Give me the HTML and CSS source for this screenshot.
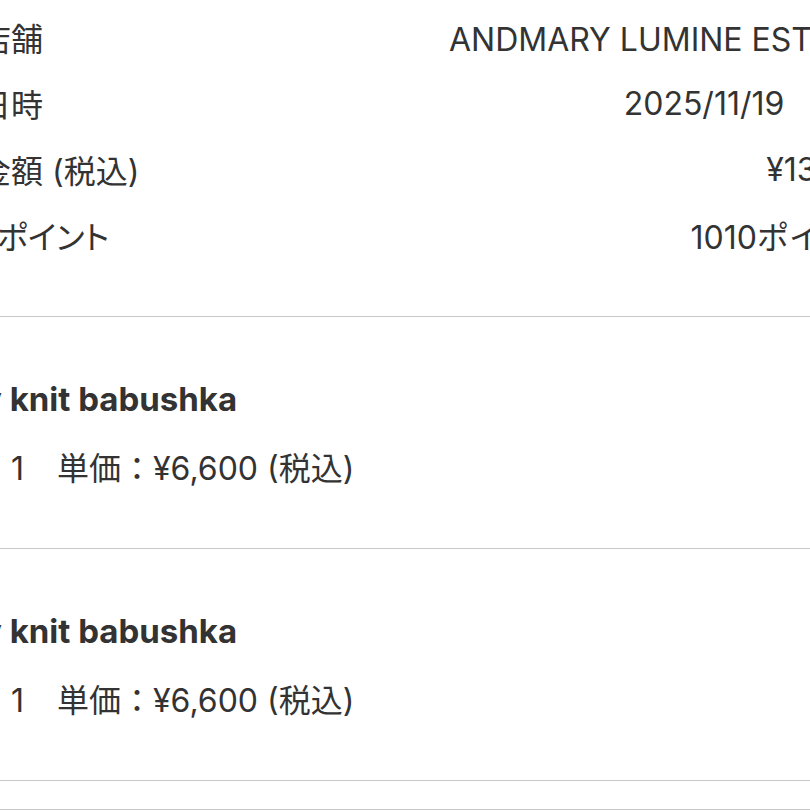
FILE: index.html
```html
<!DOCTYPE html>
<html lang="ja">
<head>
<meta charset="utf-8">
<title>購入履歴</title>
<link rel="stylesheet" href="styles.css">
</head>
<body>
<main class="receipt">
  <section class="info">
    <div class="row"><span class="label">店舗</span><span class="value">ANDMARY LUMINE EST 新宿</span></div>
    <div class="row"><span class="label">日時</span><span class="value">2025/11/19<span class="time">9:05</span></span></div>
    <div class="row"><span class="label">金額 (税込)</span><span class="value">¥13,200</span></div>
    <div class="row"><span class="label label-point">ポイント</span><span class="value">1010ポイント</span></div>
  </section>
  <section class="item">
    <div class="item-name">y knit babushka</div>
    <div class="item-meta"><span class="qty">1</span><span class="price">単価：¥6,600 (税込)</span></div>
  </section>
  <section class="item">
    <div class="item-name">y knit babushka</div>
    <div class="item-meta"><span class="qty">1</span><span class="price">単価：¥6,600 (税込)</span></div>
  </section>
  <div class="footer-gap"></div>
</main>
</body>
</html>
```
FILE: styles.css
```css
html, body {
  margin: 0;
  padding: 0;
  background: #ffffff;
  overflow: hidden;
}

body {
  font-family: "Inter", "Noto Sans CJK JP", sans-serif;
  color: #333333;
}

.receipt {
  margin-left: -21px;
  width: 906px;
}

.info {
  padding: 4px 0 48px;
  border-bottom: 1px solid #c8c8c8;
}

.row {
  display: flex;
  justify-content: space-between;
  align-items: center;
  height: 66px;
  font-size: 32px;
}

.time {
  margin-left: 32px;
}

.label-point {
  padding-left: 18px;
  font-feature-settings: "palt";
}

.item {
  padding: 62px 0 59px 3px;
  border-bottom: 1px solid #c8c8c8;
}

.item-name {
  height: 40px;
  line-height: 40px;
  font-size: 33px;
  font-weight: bold;
}

.item-meta {
  display: flex;
  gap: 33px;
  margin-top: 30px;
  padding-left: 29px;
  height: 40px;
  line-height: 40px;
  font-size: 32px;
}

.footer-gap {
  height: 28px;
  border-bottom: 1px solid #c8c8c8;
}
```
